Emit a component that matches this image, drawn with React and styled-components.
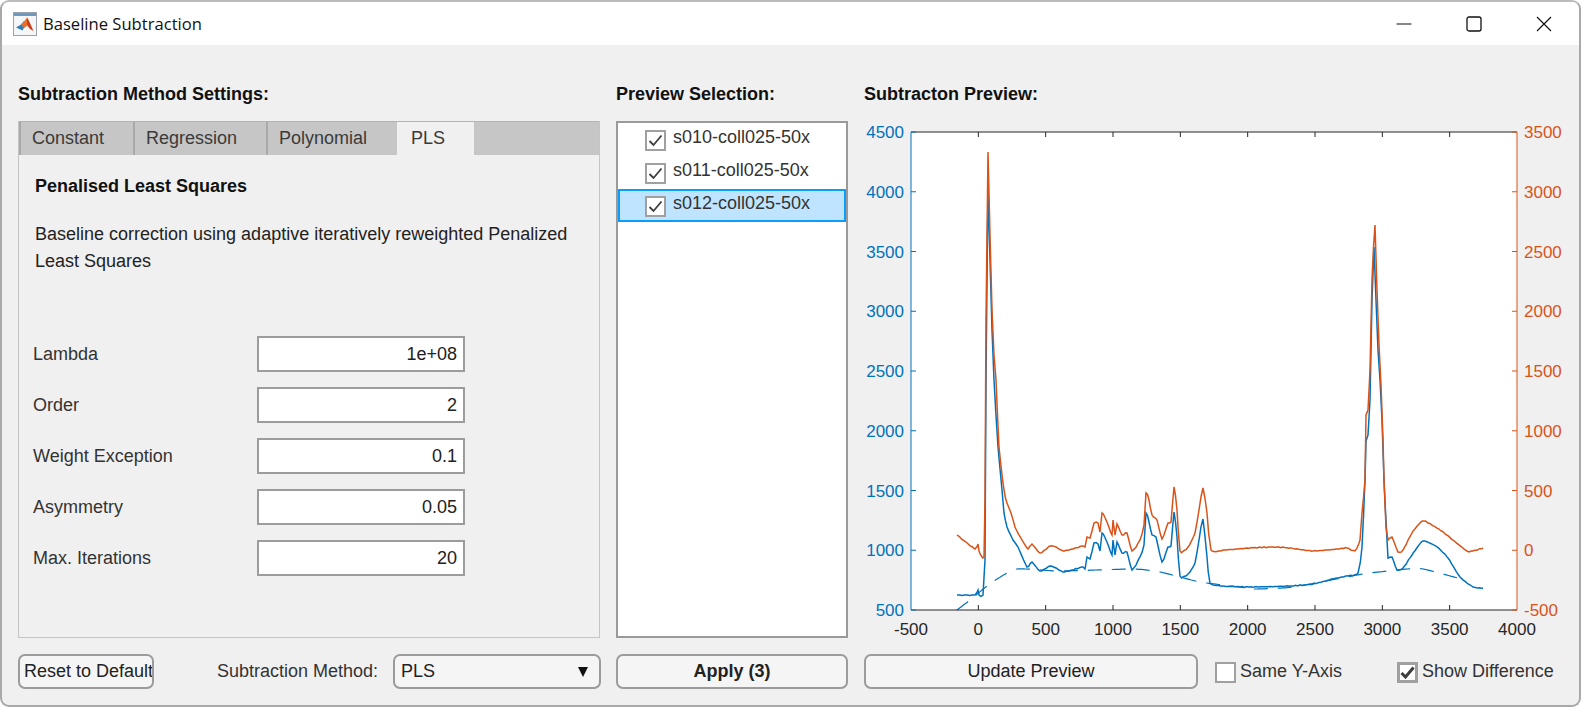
import React from "react";
import styled, { createGlobalStyle } from "styled-components";

const GlobalStyle = createGlobalStyle`
  html, body {
    margin: 0;
    padding: 0;
    background: #fff;
    overflow: hidden;
  }
  * { box-sizing: border-box; }
`;

const Window = styled.div`
  width: 1581px;
  height: 707px;
  display: flex;
  flex-direction: column;
  border: 2px solid #a9a9a9;
  border-top-color: #bcbcbc;
  border-radius: 9px;
  overflow: hidden;
  background: #f0f0f0;
  font-family: "Liberation Sans", Arial, sans-serif;
  font-size: 18px;
  color: #262626;
`;

const TitleBar = styled.header`
  height: 43px;
  flex: none;
  display: flex;
  align-items: center;
  background: #fff;
  padding-left: 11px;
`;

const TitleText = styled.span`
  margin-left: 6px;
  font-family: "Open Sans", sans-serif;
  font-size: 16.6px;
  color: #111;
`;

const WinButtons = styled.div`
  margin-left: auto;
  display: flex;
`;

const WinButton = styled.div`
  width: 70px;
  height: 43px;
  display: flex;
  align-items: center;
  justify-content: center;
`;

const Main = styled.main`
  flex: 1;
  display: grid;
  grid-template-columns: 582px 232px 700px;
  grid-template-rows: 22px 517px 35px;
  column-gap: 16px;
  row-gap: 16px;
  padding: 38px 0 0 16px;
`;

const Heading = styled.h2`
  margin: 0;
  font-size: 18px;
  line-height: 22px;
  font-weight: 700;
  color: #111;
`;

const TabPanel = styled.section`
  display: flex;
  flex-direction: column;
  border: 1px solid #c4c4c4;
  border-top: none;
`;

const TabStrip = styled.div`
  height: 34px;
  flex: none;
  display: flex;
  background: #c6c6c6;
  border-top: 1px solid #b4b4b4;
`;

const Tab = styled.div`
  width: ${(p) => p.$width}px;
  display: flex;
  align-items: center;
  padding-left: ${(p) => (p.$active ? 12 : 11)}px;
  color: #3a3a3a;
  background: ${(p) => (p.$active ? "#f0f0f0" : "transparent")};
  border-left: 2px solid ${(p) => (p.$active ? "#f0f0f0" : "#a9a9a9")};
`;

const TabBody = styled.div`
  flex: 1;
  padding: 19px 0 0 16px;
`;

const BlockTitle = styled.div`
  font-weight: 700;
  line-height: 24px;
  color: #111;
`;

const Description = styled.p`
  margin: 23px 0 0;
  width: 545px;
  line-height: 26.5px;
  color: #222;
`;

const Fields = styled.div`
  margin: 62px 0 0 -2px;
  display: flex;
  flex-direction: column;
  gap: 15px;
`;

const FieldRow = styled.label`
  display: flex;
  align-items: center;
  height: 36px;
  color: #333;
`;

const FieldLabel = styled.span`
  width: 224px;
`;

const NumberInput = styled.input`
  width: 208px;
  height: 36px;
  border: 2px solid #9c9c9c;
  background: #fff;
  padding: 0 6px;
  text-align: right;
  font: inherit;
  color: #222;
  outline: none;
`;

const ListBox = styled.div`
  border: 2px solid #9a9a9a;
  background: #fff;
`;

const ListRow = styled.div`
  height: 33px;
  display: flex;
  align-items: center;
  gap: 7px;
  padding-left: 25px;
  color: #333;
  background: ${(p) => (p.$selected ? "#bfe4ff" : "transparent")};
  border: 2px solid ${(p) => (p.$selected ? "#0a9dfb" : "transparent")};
  border-width: ${(p) => (p.$selected ? "2px" : "0 2px")};
`;

const ListText = styled.span`
  margin-top: -4px;
`;

const CheckBox = styled.span`
  width: 21px;
  height: 21px;
  flex: none;
  display: flex;
  align-items: center;
  justify-content: center;
  background: #fff;
  border: ${(p) => (p.$thick ? 3 : 2)}px solid #a0a0a0;
  margin-top: 1px;
`;

const Footer = styled.div`
  display: flex;
  align-items: center;
`;

const Button = styled.button`
  height: 35px;
  flex: ${(p) => (p.$grow ? 1 : "none")};
  width: ${(p) => (p.$width ? `${p.$width}px` : "auto")};
  padding: 0 0 0 ${(p) => p.$inset || 0}px;
  border: 2px solid #9b9b9b;
  border-radius: 7px;
  background: #f5f5f5;
  font-family: inherit;
  font-size: 18px;
  font-weight: ${(p) => (p.$bold ? 700 : 400)};
  color: #222;
  white-space: nowrap;
  overflow: hidden;
`;

const FooterLabel = styled.span`
  width: 176px;
  margin-left: 63px;
  flex: none;
  color: #333;
`;

const Select = styled.div`
  width: 208px;
  height: 35px;
  flex: none;
  display: flex;
  align-items: center;
  justify-content: space-between;
  padding: 0 11px 0 6px;
  border: 2px solid #9b9b9b;
  border-radius: 7px;
  background: #f5f5f5;
  color: #222;
`;

const Caret = styled.span`
  width: 0;
  height: 0;
  border-left: 5.5px solid transparent;
  border-right: 5.5px solid transparent;
  border-top: 10px solid #111;
`;

const CheckLabel = styled.label`
  display: flex;
  align-items: center;
  gap: 4px;
  margin-left: ${(p) => p.$left}px;
  color: #333;
`;

const ChartFrame = styled.div`
  display: block;
`;

const TickText = styled.text`
  font-family: "Liberation Sans", Arial, sans-serif;
  font-size: 17px;
`;

const BLUE = "#0072bd";
const ORANGE = "#d95319";
const DARK = "#262626";

// traced in page pixels, the svg viewBox uses the same coordinates
const bluePts = [
  [957, 595], [975, 595], [978, 590], [979, 595], [983, 595], [985, 560], [986, 380], [988, 187],
  [990, 260], [992, 330], [994, 380], [998, 447], [1002, 490], [1004, 513], [1007, 527], [1013, 540],
  [1018, 547], [1027, 567], [1032, 562], [1040, 571], [1050, 566], [1056, 568], [1063, 572], [1072, 570],
  [1083, 567], [1085, 569], [1087, 557], [1090, 559], [1094, 543], [1098, 544], [1100, 551], [1102, 533],
  [1107, 542], [1112, 555], [1113, 540], [1115, 555], [1117, 542], [1122, 553], [1127, 552], [1132, 570],
  [1140, 557], [1144, 545], [1146, 513], [1149, 522], [1152, 535], [1156, 537], [1162, 562], [1168, 547],
  [1171, 546], [1174, 512], [1177, 537], [1180, 576], [1188, 574], [1195, 563], [1199, 540], [1203, 519],
  [1207, 557], [1210, 583], [1223, 586], [1250, 587], [1290, 586], [1313, 584], [1333, 579], [1347, 576],
  [1358, 573], [1362, 547], [1365, 480], [1366, 441], [1368, 435], [1370, 400], [1372, 300], [1374, 247],
  [1376, 300], [1378, 350], [1380, 380], [1382, 420], [1384, 480], [1387, 540], [1388, 558], [1392, 557],
  [1397, 570], [1403, 568], [1412, 555], [1423, 541], [1437, 547], [1448, 558], [1460, 577], [1473, 587],
  [1483, 588],
];

const orangePts = [
  [957, 535], [975, 549], [978, 544], [979, 551], [984, 557], [985, 500], [986, 320], [988, 152],
  [990, 235], [992, 310], [994, 355], [996, 380], [999, 447], [1004, 490], [1007, 503], [1011, 513],
  [1015, 527], [1022, 540], [1028, 549], [1032, 544], [1040, 553], [1050, 546], [1056, 547], [1063, 551], [1072, 549],
  [1083, 546], [1085, 547], [1087, 537], [1090, 538], [1094, 523], [1098, 523], [1100, 532], [1102, 513],
  [1107, 522], [1112, 535], [1113, 520], [1115, 535], [1117, 524], [1122, 535], [1127, 533], [1132, 551],
  [1140, 540], [1144, 525], [1146, 493], [1149, 500], [1152, 515], [1157, 520], [1162, 539], [1168, 523],
  [1171, 522], [1174, 487], [1177, 510], [1180, 551], [1188, 547], [1195, 533], [1199, 510], [1203, 488],
  [1207, 513], [1211, 550], [1225, 550], [1250, 548], [1273, 547], [1290, 548], [1313, 551], [1337, 549],
  [1347, 548], [1355, 551], [1360, 540], [1362, 513], [1365, 480], [1366, 415], [1368, 410], [1370, 370],
  [1372, 280], [1375, 225], [1377, 290], [1379, 345], [1381, 385], [1383, 440], [1384, 480], [1386, 527],
  [1388, 540], [1392, 537], [1398, 552], [1403, 550], [1412, 533], [1423, 521], [1440, 530], [1453, 540],
  [1467, 551], [1473, 551], [1483, 548],
];

const baselinePts = [
  [957, 610], [970, 600], [987, 586], [997, 579], [1017, 569], [1060, 571], [1133, 569], [1160, 572],
  [1200, 582], [1240, 587], [1253, 589], [1293, 587], [1363, 574], [1407, 569], [1423, 569], [1458, 578],
];

// hermite pass through the traced points, with a little noise on the measured lines
const smooth = (pts, noise) => {
  const out = [];
  for (let i = 0; i < pts.length - 1; i++) {
    const a = pts[i];
    const b = pts[i + 1];
    const prev = pts[i - 1] || a;
    const next = pts[i + 2] || b;
    const steps = Math.max(1, Math.ceil((b[0] - a[0]) / 2));
    for (let s = 0; s < steps; s++) {
      const t = s / steps;
      const h1 = 2 * t ** 3 - 3 * t ** 2 + 1;
      const h2 = t ** 3 - 2 * t ** 2 + t;
      const h3 = -2 * t ** 3 + 3 * t ** 2;
      const h4 = t ** 3 - t ** 2;
      const x = h1 * a[0] + h2 * 0.3 * (b[0] - prev[0]) + h3 * b[0] + h4 * 0.3 * (next[0] - a[0]);
      const y = h1 * a[1] + h2 * 0.3 * (b[1] - prev[1]) + h3 * b[1] + h4 * 0.3 * (next[1] - a[1]);
      const jitter = s === 0 ? 0 : noise * Math.sin(x * 2.7) * Math.cos(x * 1.3);
      out.push([x.toFixed(1), (y + jitter).toFixed(1)]);
    }
  }
  out.push(pts[pts.length - 1]);
  return out.map((p) => p.join(",")).join(" ");
};

const AXIS = { left: 911, right: 1517, top: 132, bottom: 610 };
const xTicks = [-500, 0, 500, 1000, 1500, 2000, 2500, 3000, 3500, 4000];
const leftTicks = [500, 1000, 1500, 2000, 2500, 3000, 3500, 4000, 4500];
const rightTicks = [-500, 0, 500, 1000, 1500, 2000, 2500, 3000, 3500];

const xPos = (v) => AXIS.left + ((v + 500) / 4500) * (AXIS.right - AXIS.left);
const yPos = (i) => AXIS.bottom - (i / 8) * (AXIS.bottom - AXIS.top);

function Chart() {
  return (
    <svg width="700" height="517" viewBox="864 121 700 517">
      <rect x={AXIS.left} y={AXIS.top} width={AXIS.right - AXIS.left} height={AXIS.bottom - AXIS.top} fill="#fff" />
      <polyline points={smooth(baselinePts, 0)} fill="none" stroke={BLUE} strokeWidth="1.2" strokeDasharray="14 10" />
      <polyline points={smooth(bluePts, 0.5)} fill="none" stroke={BLUE} strokeWidth="1.5" />
      <polyline points={smooth(orangePts, 0.5)} fill="none" stroke={ORANGE} strokeWidth="1.5" />
      <path d={`M${AXIS.left} ${AXIS.top}H${AXIS.right}M${AXIS.left} ${AXIS.bottom}H${AXIS.right}`} stroke={DARK} strokeWidth="1" />
      <path d={`M${AXIS.left} ${AXIS.top}V${AXIS.bottom}`} stroke={BLUE} strokeWidth="1" />
      <path d={`M${AXIS.right} ${AXIS.top}V${AXIS.bottom}`} stroke={ORANGE} strokeWidth="1" />
      {xTicks.map((t) => (
        <g key={t}>
          {t > -500 && t < 4000 && (
            <path
              d={`M${xPos(t)} ${AXIS.top}v5M${xPos(t)} ${AXIS.bottom}v-5`}
              stroke={DARK}
              strokeWidth="1"
            />
          )}
          <TickText x={xPos(t)} y={635} textAnchor="middle" fill={DARK}>
            {t}
          </TickText>
        </g>
      ))}
      {leftTicks.map((t, i) => (
        <g key={t}>
          <path d={`M${AXIS.left} ${yPos(i)}h5`} stroke={BLUE} strokeWidth="1" />
          <TickText x={904} y={yPos(i) + 6} textAnchor="end" fill={BLUE}>
            {t}
          </TickText>
        </g>
      ))}
      {rightTicks.map((t, i) => (
        <g key={t}>
          <path d={`M${AXIS.right} ${yPos(i)}h-5`} stroke={ORANGE} strokeWidth="1" />
          <TickText x={1524} y={yPos(i) + 6} fill={ORANGE}>
            {t}
          </TickText>
        </g>
      ))}
    </svg>
  );
}

function MatlabIcon() {
  return (
    <svg width="24" height="24" viewBox="0 0 24 24">
      <rect x="0.5" y="0.5" width="23" height="23" fill="#f4f6f8" stroke="#9aa3ab" />
      <rect x="1" y="1" width="22" height="3" fill="#6d9ac4" />
      <path d="M3 15.5L8 12.5L11 9L13 12L9.5 18.5Z" fill="#2f7fb8" />
      <path d="M8 12.5L11.5 9L14 5.5L16 9L14 14L11 16Z" fill="#e8702a" />
      <path d="M14 5.5L17 11L20.5 19L17 17L14 13Z" fill="#c9401c" />
    </svg>
  );
}

function CheckMark({ heavy }) {
  return (
    <svg width="15" height="13" viewBox="0 0 15 13">
      <path
        d="M1.5 7L5.5 11L13.5 1.5"
        fill="none"
        stroke="#3d3d3d"
        strokeWidth={heavy ? 3 : 1.8}
      />
    </svg>
  );
}

const fields = [
  ["Lambda", "1e+08"],
  ["Order", "2"],
  ["Weight Exception", "0.1"],
  ["Asymmetry", "0.05"],
  ["Max. Iterations", "20"],
];

const previews = ["s010-coll025-50x", "s011-coll025-50x", "s012-coll025-50x"];

const tabs = [
  ["Constant", 114],
  ["Regression", 133],
  ["Polynomial", 131],
];

export default function App() {
  return (
    <Window>
      <GlobalStyle />
      <TitleBar>
        <MatlabIcon />
        <TitleText>Baseline Subtraction</TitleText>
        <WinButtons>
          <WinButton>
            <svg width="16" height="16" viewBox="0 0 16 16">
              <path d="M0.5 8H15.5" stroke="#111" strokeWidth="1" />
            </svg>
          </WinButton>
          <WinButton>
            <svg width="16" height="16" viewBox="0 0 16 16">
              <rect x="1" y="1" width="14" height="14" rx="2" fill="none" stroke="#111" strokeWidth="1.3" />
            </svg>
          </WinButton>
          <WinButton>
            <svg width="16" height="16" viewBox="0 0 16 16">
              <path d="M1 1L15 15M15 1L1 15" stroke="#111" strokeWidth="1.2" />
            </svg>
          </WinButton>
        </WinButtons>
      </TitleBar>
      <Main>
        <Heading>Subtraction Method Settings:</Heading>
        <Heading>Preview Selection:</Heading>
        <Heading>Subtracton Preview:</Heading>

        <TabPanel>
          <TabStrip>
            {tabs.map(([name, width]) => (
              <Tab key={name} $width={width}>
                {name}
              </Tab>
            ))}
            <Tab $width={77} $active>
              PLS
            </Tab>
          </TabStrip>
          <TabBody>
            <BlockTitle>Penalised Least Squares</BlockTitle>
            <Description>
              Baseline correction using adaptive iteratively reweighted Penalized Least Squares
            </Description>
            <Fields>
              {fields.map(([label, value]) => (
                <FieldRow key={label}>
                  <FieldLabel>{label}</FieldLabel>
                  <NumberInput readOnly value={value} />
                </FieldRow>
              ))}
            </Fields>
          </TabBody>
        </TabPanel>

        <ListBox>
          {previews.map((name, i) => (
            <ListRow key={name} $selected={i === 2}>
              <CheckBox>
                <CheckMark />
              </CheckBox>
              <ListText>{name}</ListText>
            </ListRow>
          ))}
        </ListBox>

        <ChartFrame>
          <Chart />
        </ChartFrame>

        <Footer>
          <Button $width={136} $inset={4}>
            Reset to Default
          </Button>
          <FooterLabel>Subtraction Method:</FooterLabel>
          <Select>
            PLS
            <Caret />
          </Select>
        </Footer>
        <Footer>
          <Button $grow $bold>
            Apply (3)
          </Button>
        </Footer>
        <Footer>
          <Button $width={334}>Update Preview</Button>
          <CheckLabel $left={17}>
            <CheckBox />
            Same Y-Axis
          </CheckLabel>
          <CheckLabel $left={55}>
            <CheckBox $thick>
              <CheckMark heavy />
            </CheckBox>
            Show Difference
          </CheckLabel>
        </Footer>
      </Main>
    </Window>
  );
}
